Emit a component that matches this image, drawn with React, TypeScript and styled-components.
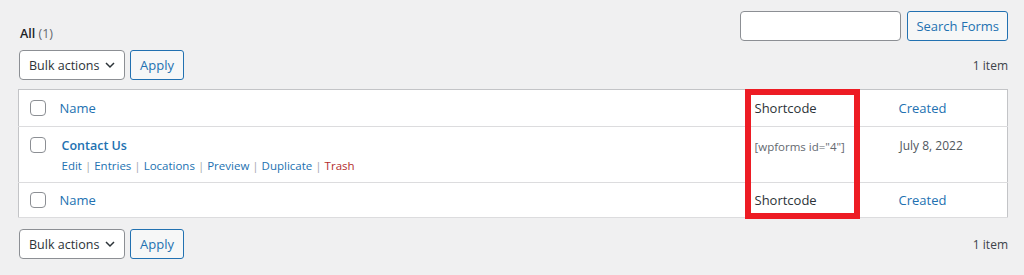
import React from 'react'
import styled, { createGlobalStyle } from 'styled-components'

const GlobalStyle = createGlobalStyle`
  html, body {
    margin: 0;
    padding: 0;
    background: #f0f0f1;
  }
  body {
    font-family: "Open Sans", "Noto Sans", "Liberation Sans", sans-serif;
    font-size: 13px;
    color: #3c434a;
  }
`

const Page = styled.div`
  padding: 11px 16px 0 18px;
`

const TopBar = styled.div`
  display: flex;
  align-items: flex-end;
  justify-content: space-between;
  height: 30px;
`

const Views = styled.div`
  padding: 0 0 0 2px;
  margin-bottom: -1px;
  font-size: 12.5px;

  strong {
    color: #1d2327;
    font-weight: 600;
  }
`

const ViewCount = styled.span`
  color: #646970;
`

const SearchBox = styled.div`
  display: flex;
  gap: 6px;
`

const SearchInput = styled.input`
  box-sizing: border-box;
  width: 161px;
  height: 30px;
  border: 1px solid #8c8f94;
  border-radius: 4px;
  background: #fff;
`

const Button = styled.button<{ $px?: number }>`
  box-sizing: border-box;
  height: 30px;
  padding: 0 ${({ $px }) => $px ?? 9}px;
  border: 1px solid #2271b1;
  border-radius: 3px;
  background: #f6f7f7;
  color: #2271b1;
  font-family: inherit;
  font-size: 13px;
`

const TableNav = styled.div<{ $top?: boolean }>`
  display: flex;
  align-items: center;
  justify-content: space-between;
  height: 30px;
  margin: ${({ $top }) => ($top ? '9px 0 9px 1px' : '11px 0 0 1px')};
`

const Actions = styled.div`
  display: flex;
  gap: 5px;
`

const Select = styled.div`
  box-sizing: border-box;
  display: flex;
  align-items: center;
  justify-content: space-between;
  width: 106px;
  height: 30px;
  padding: 0 9px 0 9px;
  border: 1px solid #8c8f94;
  border-radius: 4px;
  background: #fff;
  color: #2c3338;
  font-size: 12.5px;
`

const Count = styled.span`
  color: #3c434a;
  font-size: 12px;
`

const TableWrap = styled.div`
  position: relative;
`

const Table = styled.table`
  width: 100%;
  border-collapse: collapse;
  background: #fff;
  border: 1px solid #c3c4c7;
  table-layout: fixed;
`

const Cell = styled.td<{ $h: number; $pl?: number }>`
  box-sizing: border-box;
  height: ${({ $h }) => $h}px;
  padding: 0 0 0 ${({ $pl }) => $pl ?? 10}px;
  border-bottom: 1px solid #dcdcde;
  vertical-align: middle;
  text-align: left;
  font-weight: 400;
`

const TopCell = styled(Cell)`
  vertical-align: top;
  padding-top: 9px;
`

const HeadLink = styled.a<{ $plain?: boolean }>`
  color: ${({ $plain }) => ($plain ? '#2c3338' : '#2271b1')};
  font-size: 13px;
  text-decoration: none;
`

const Check = styled.span`
  display: block;
  box-sizing: border-box;
  width: 16px;
  height: 16px;
  border: 1px solid #8c8f94;
  border-radius: 4px;
  background: #fff;
`

const RowTitle = styled.a`
  display: block;
  padding-left: 2px;
  color: #2271b1;
  font-size: 12.5px;
  font-weight: 600;
  line-height: 19px;
  text-decoration: none;
`

const RowActions = styled.div`
  padding-left: 2px;
  margin-top: 2px;
  font-size: 11.5px;
  line-height: 18px;
  color: #a7aaad;

  a {
    color: #2271b1;
    text-decoration: none;
  }
  a.trash {
    color: #b32d2e;
  }
`

const Shortcode = styled.span`
  display: block;
  padding-top: 1px;
  color: #646970;
  font-size: 11.5px;
  line-height: 19px;
`

const DateText = styled.span`
  display: block;
  padding-left: 1px;
  color: #50575e;
  font-size: 12px;
  line-height: 19px;
`

const Highlight = styled.div`
  position: absolute;
  left: 727px;
  top: 0;
  width: 115px;
  height: 130px;
  box-sizing: border-box;
  border: 6px solid #ed1c24;
  pointer-events: none;
`

const Chevron = () => (
  <svg width="10" height="7" viewBox="0 0 10 7" fill="none">
    <path d="M1 1l4 4 4-4" stroke="#2c3338" strokeWidth="1.5" />
  </svg>
)

const BulkBar: React.FC<{ top?: boolean }> = ({ top }) => (
  <TableNav $top={top}>
    <Actions>
      <Select>
        Bulk actions
        <Chevron />
      </Select>
      <Button>Apply</Button>
    </Actions>
    <Count>1 item</Count>
  </TableNav>
)

const HeaderRow: React.FC<{ foot?: boolean }> = ({ foot }) => (
  <tr>
    <Cell as="th" $h={foot ? 35 : 37} $pl={11}>
      <Check />
    </Cell>
    <Cell as="th" $h={foot ? 35 : 37}>
      <HeadLink>Name</HeadLink>
    </Cell>
    <Cell as="th" $h={foot ? 35 : 37}>
      <HeadLink $plain>Shortcode</HeadLink>
    </Cell>
    <Cell as="th" $h={foot ? 35 : 37}>
      <HeadLink>Created</HeadLink>
    </Cell>
  </tr>
)

export default function App() {
  return (
    <Page>
      <GlobalStyle />
      <TopBar>
        <Views>
          <strong>All</strong> <ViewCount>(1)</ViewCount>
        </Views>
        <SearchBox>
          <SearchInput />
          <Button $px={8}>Search Forms</Button>
        </SearchBox>
      </TopBar>
      <BulkBar top />
      <TableWrap>
        <Table>
          <colgroup>
            <col style={{ width: 31 }} />
            <col />
            <col style={{ width: 144 }} />
            <col style={{ width: 119 }} />
          </colgroup>
          <thead>
            <HeaderRow />
          </thead>
          <tbody>
            <tr>
              <TopCell $h={56} $pl={11} style={{ paddingTop: 10 }}>
                <Check />
              </TopCell>
              <TopCell $h={56}>
                <RowTitle>Contact Us</RowTitle>
                <RowActions>
                  <a>Edit</a> | <a>Entries</a> | <a>Locations</a> | <a>Preview</a> |{' '}
                  <a>Duplicate</a> | <a className="trash">Trash</a>
                </RowActions>
              </TopCell>
              <TopCell $h={56}>
                <Shortcode>[wpforms id="4"]</Shortcode>
              </TopCell>
              <TopCell $h={56}>
                <DateText>July 8, 2022</DateText>
              </TopCell>
            </tr>
          </tbody>
          <tfoot>
            <HeaderRow foot />
          </tfoot>
        </Table>
        <Highlight />
      </TableWrap>
      <BulkBar />
    </Page>
  )
}
